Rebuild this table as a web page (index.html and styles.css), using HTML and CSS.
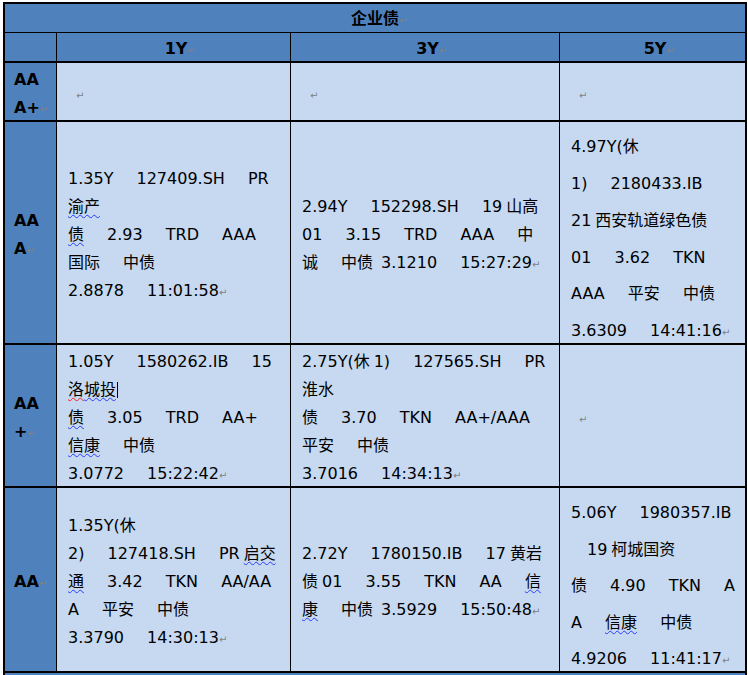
FILE: index.html
```html
<!DOCTYPE html>
<html lang="zh-CN">
<head>
<meta charset="utf-8">
<title>企业债</title>
<link rel="stylesheet" href="styles.css">
</head>
<body>
<div class="tbl">
  <div class="c blue title"><div class="l">企业债<span class="pm">↵</span></div></div>

  <div class="c blue lab"></div>
  <div class="c blue hd"><div class="l">1Y<span class="pm">↵</span></div></div>
  <div class="c blue hd"><div class="l">3Y<span class="pm">↵</span></div></div>
  <div class="c blue hd end"><div class="l">5Y<span class="pm">↵</span></div></div>

  <div class="c blue lab"><div class="l">AA</div><div class="l">A+<span class="pm">↵</span></div></div>
  <div class="c lt"><div class="l"><span class="pm e">↵</span></div></div>
  <div class="c lt"><div class="l"><span class="pm e">↵</span></div></div>
  <div class="c lt end"><div class="l"><span class="pm e">↵</span></div></div>

  <div class="c blue lab"><div class="l">AA</div><div class="l">A<span class="pm">↵</span></div></div>
  <div class="c lt">
    <div class="l">1.35Y 127409.SH PR</div>
    <div class="l"><span class="sq">渝产</span></div>
    <div class="l"><span class="sq">债</span> 2.93 TRD AAA</div>
    <div class="l">国际 中债</div>
    <div class="l">2.8878 11:01:58<span class="pm">↵</span></div>
  </div>
  <div class="c lt">
    <div class="l">2.94Y 152298.SH 19&#8197;山高</div>
    <div class="l">01 3.15 TRD AAA 中</div>
    <div class="l">诚 中债&#8194;3.1210 15:27:29<span class="pm">↵</span></div>
  </div>
  <div class="c lt end tall">
    <div class="l">4.97Y(休</div>
    <div class="l">1) 2180433.IB</div>
    <div class="l">21&#8197;西安轨道绿色债</div>
    <div class="l">01 3.62 TKN</div>
    <div class="l">AAA 平安 中债</div>
    <div class="l">3.6309 14:41:16<span class="pm">↵</span></div>
  </div>

  <div class="c blue lab"><div class="l">AA</div><div class="l">+<span class="pm">↵</span></div></div>
  <div class="c lt">
    <div class="l">1.05Y 1580262.IB 15</div>
    <div class="l"><span class="sq red">洛</span><span class="sq">城投</span><span class="caret"></span></div>
    <div class="l"><span class="sq">债</span> 3.05 TRD AA+</div>
    <div class="l"><span class="sq">信康</span> 中债</div>
    <div class="l">3.0772 15:22:42<span class="pm">↵</span></div>
  </div>
  <div class="c lt">
    <div class="l">2.75Y(休&#8197;1) 127565.SH PR</div>
    <div class="l">淮水</div>
    <div class="l">债 3.70 TKN AA+/AAA</div>
    <div class="l">平安 中债</div>
    <div class="l">3.7016 14:34:13<span class="pm">↵</span></div>
  </div>
  <div class="c lt end"><div class="l"><span class="pm e">↵</span></div></div>

  <div class="c blue lab"><div class="l">AA<span class="pm">↵</span></div></div>
  <div class="c lt">
    <div class="l">1.35Y(休</div>
    <div class="l">2) 127418.SH PR&#8197;<span class="sq">启交</span></div>
    <div class="l"><span class="sq">通</span> 3.42 TKN AA/AA</div>
    <div class="l">A 平安 中债</div>
    <div class="l">3.3790 14:30:13<span class="pm">↵</span></div>
  </div>
  <div class="c lt">
    <div class="l">2.72Y 1780150.IB 17&#8197;黄岩</div>
    <div class="l">债&#8197;01 3.55 TKN AA <span class="sq">信</span></div>
    <div class="l"><span class="sq">康</span> 中债&#8194;3.5929 15:50:48<span class="pm">↵</span></div>
  </div>
  <div class="c lt end tall">
    <div class="l">5.06Y 1980357.IB</div>
    <div class="l">&#8195;19&#8197;柯城国资</div>
    <div class="l">债 4.90 TKN A</div>
    <div class="l">A <span class="sq">信康</span> 中债</div>
    <div class="l">4.9206 11:41:17<span class="pm">↵</span></div>
  </div>

  <div class="c blue foot end"></div>
</div>
</body>
</html>
```

FILE: styles.css
```css
body {
  margin: 0;
  background: #ffffff;
  font-family: "DejaVu Sans", "Noto Sans CJK SC", sans-serif;
  font-size: 16px;
  color: #000000;
}

.tbl {
  display: grid;
  grid-template-columns: 52px 234px 269px 187px;
  grid-template-rows: 29px 30px 59px 223px 143px 185px 2px;
  width: 742px;
  margin: 2px 0 0 3px;
  border-left: 2px solid #000;
  border-top: 2px solid #000;
}

.c {
  box-sizing: border-box;
  min-width: 0;
  border-right: 1px solid #000;
  border-bottom: 2px solid #000;
  display: flex;
  flex-direction: column;
  justify-content: center;
  padding: 0 7px 0 11px;
}

.end {
  border-right-width: 2px;
}

.blue {
  background: #4f81bd;
}

.lt {
  background: #c6d9f1;
}

.title {
  grid-column: 1 / -1;
  border-bottom-width: 1px;
  border-right-width: 2px;
  align-items: center;
  padding: 0;
  font-weight: bold;
}

.title .l {
  padding-top: 5px;
}

.hd {
  font-weight: bold;
  text-align: center;
  padding: 0 7px 0 12px;
}

.lab {
  font-weight: bold;
  padding: 0 0 0 9px;
}

.foot {
  grid-column: 1 / -1;
  border-bottom: 0;
}

.l {
  box-sizing: border-box;
  height: 28px;
  padding-top: 6px;
  line-height: 19px;
  white-space: pre;
  word-spacing: 18px;
}

.tall .l {
  height: 37px;
  padding-top: 15px;
}

.pm {
  display: inline-block;
  width: 0;
  white-space: nowrap;
  word-spacing: 0;
  font-family: "DejaVu Sans", sans-serif;
  font-weight: normal;
  font-size: 10px;
  color: #808080;
}

.pm.e {
  margin-left: 8px;
}

.sq {
  text-decoration: underline wavy #2a3cff;
  text-decoration-thickness: 1px;
  text-underline-offset: 2px;
}

.sq.red {
  text-decoration-color: #ff2020;
}

.caret {
  display: inline-block;
  width: 1px;
  height: 16px;
  margin-left: 1px;
  background: #000;
  vertical-align: -3px;
}
```
